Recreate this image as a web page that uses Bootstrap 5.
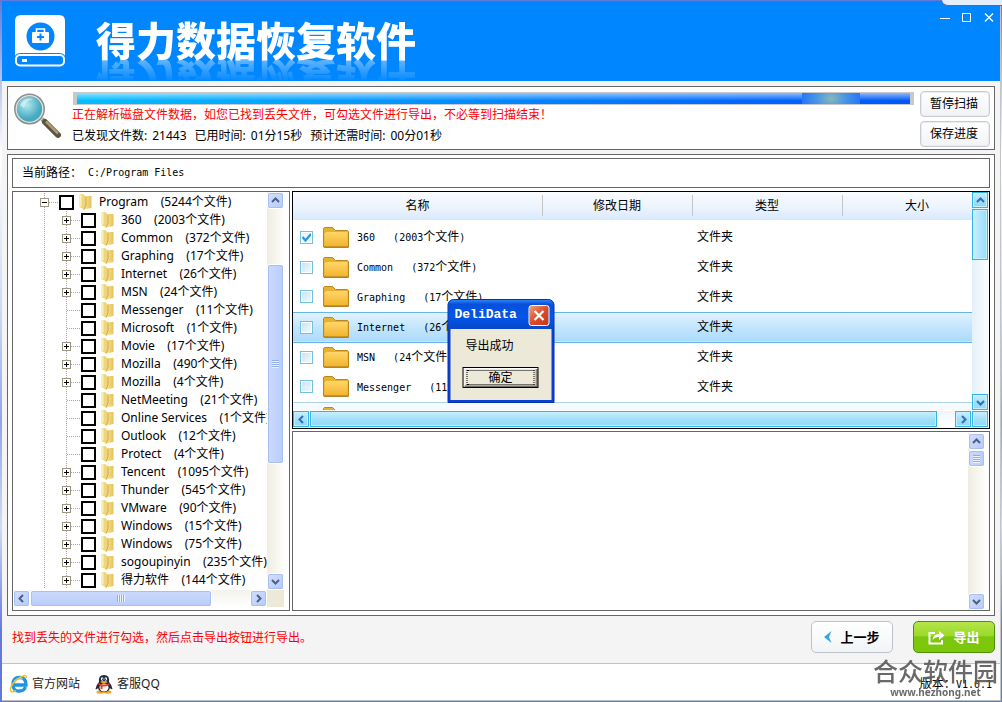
<!DOCTYPE html>
<html lang="zh-CN">
<head>
<meta charset="utf-8">
<meta name="viewport" content="width=device-width, initial-scale=1">
<title>得力数据恢复软件</title>
<link href="https://cdn.jsdelivr.net/npm/bootstrap@5.3.0/dist/css/bootstrap.min.css" rel="stylesheet">
<style>
body{font:12px/18px "Noto Sans","Noto Sans CJK SC",sans-serif;color:#000;background:linear-gradient(#5f78dc,#b9c8ee 12%,#fff 22%,#c9d8f4 45%,#8ea6e6 60%,#cfdcf5 75%,#6478d8 90%)}
button{font-family:inherit;color:#000}
.app-shell{padding:1px 1px 1px 2px}
.app-window{background:#f4f4f4;border-bottom:1px solid #bbb;border-right:1px solid #c4c4c4}
.desk-tab{position:absolute;top:0;right:0;width:60px;height:6px;background:#e4eefb;border-bottom:1px solid #56a;border-radius:0 0 0 6px}
.title-bar{background:#0087ff;height:80px;padding-left:13px}
.app-name{font:900 40px/40px "Noto Sans CJK SC",sans-serif;color:#fff;margin:0 0 4px 31px;-webkit-box-reflect:below 1px linear-gradient(transparent 45%,rgba(255,255,255,.38))}
.win-buttons{padding:9px 3px 0 0;gap:6px}
.win-buttons button{border:0;background:none;padding:0;width:16px;height:16px;line-height:0}
.box{border:1px solid #666;background:#fff}
.scan-box{margin:5px 5px 0;padding:4px 4px 2px 5px}
.scan-info{margin-left:10px}
.scan-tools{margin-left:6px}
.scan-progress{height:13px;border-radius:0;background:#c9c9c9;padding:1px 4px;margin-top:1px}
.scan-bar{background:linear-gradient(#ffffff90,#ffffff00 70%),linear-gradient(90deg,#00bfff,#0068ff 80%,#0058f6);position:relative}
.scan-bar::after{content:"";position:absolute;left:87%;width:7%;top:0;bottom:0;background:radial-gradient(ellipse 28px 20px at center,#88b8b8,#4a97e4 50%,#2b78f8)}
.scan-lines{margin-left:-1px}
.scan-stats{gap:8px;margin-top:2px}
.scan-stats b{font-weight:400;margin-left:5px}
.red-text{color:#f00}
.side-btn{width:70px;height:26px;border:1px solid #c9ccd3;border-radius:4px;background:linear-gradient(#fff,#f1f3f6);padding:0 2px 0 0;font-size:12px;box-shadow:inset 0 0 0 1px #e9ebef}
.main-box{margin:4px 5px 0;padding:3px 4px 4px;min-height:0;gap:3px}
.path-box{height:30px;padding:0 9px}
.half{font:10px/18px "DejaVu Sans Mono","Liberation Mono",monospace;white-space:pre}
.half b{font:12px/18px "Noto Sans CJK SC",sans-serif}
.panes,.right-pane{gap:2px;min-height:0;min-width:0}
.tree-box{width:278px;padding:0 5px 3px 0}
.pane-body{min-height:0}
.tree-view{overflow:hidden;padding:1px 0 0 27px}
.tree-view ul{list-style:none;margin:0;padding:0;background:repeating-linear-gradient(#aaa590 0 1px,transparent 1px 2px) 4px 0/1px 100% no-repeat}
.tree-view ul ul{margin-left:22px}
.tree-row{height:18px;white-space:pre}
.twist{width:9px;height:9px;border:1px solid #9b9782;padding:0;background:#fff;line-height:0;flex:none}
.twist svg{display:block}
.twist-none{width:5px;margin-right:4px;flex:none}
.dots{width:10px;height:1px;background:repeating-linear-gradient(90deg,#aaa590 0 1px,transparent 1px 2px);flex:none}
.twist-none+.dots{width:14px;margin-left:-4px}
.tree-row input{appearance:none;width:15px;height:15px;border:2px solid #000;background:#fff;margin:0 5px 0 0;flex:none}
.tree-row svg.fold{margin-right:7px;flex:none}
.xp-v{width:17px;background:linear-gradient(90deg,#efede2,#fdfdfa)}
.xp-h{height:17px;background:linear-gradient(#f3f2ea,#fff)}
.xp-btn,.xp-thumb{border:1px solid #fff;outline:1px solid #a9bff2;outline-offset:-2px;border-radius:3px;background:linear-gradient(135deg,#d2e0ff,#b5caf9);padding:0;width:17px;height:17px;flex:none;display:flex;align-items:center;justify-content:center}
.xp-v .xp-thumb{height:auto;min-height:17px;background:linear-gradient(90deg,#cbdafe,#b9cdfb)}
.xp-h .xp-thumb{width:auto;background:linear-gradient(#cbdafe,#b9cdfb)}
.grip-v{width:7px;height:8px;background:repeating-linear-gradient(#8eacec 0 1px,#eef4ff 1px 2px)}
.grip-h{width:8px;height:7px;background:repeating-linear-gradient(90deg,#8eacec 0 1px,#eef4ff 1px 2px)}
.xp-corner{width:17px;background:#ece9d8}
.file-box{border:1px solid #000;background:#fff;height:238px;flex:none;padding-right:1px}
.file-view{overflow:hidden}
.file-table{width:100%;table-layout:fixed;border-collapse:collapse}
.file-table th{height:30px;font-weight:400;text-align:center;padding:0 0 2px;position:relative;background:linear-gradient(#fafcff,#e9f2fd 60%,#d8e9fe 92%,#fff 93%)}
.file-table th:last-child{padding-left:20px}
.file-table th+th::before{content:"";position:absolute;left:0;top:3px;width:1px;height:21px;background:#c5c5c5}
.file-table td{height:30px;padding:0 0 0 5px;white-space:nowrap;overflow:hidden}
.file-table td:first-child{padding-left:4px}
.file-table tr.picked td{background:linear-gradient(#e2f2fe,#c3e5fd 50%,#aadafb);border:solid #65b3e8;border-width:1px 0}
.file-table tr.next-row td{border-top:1px solid #abd5e5;background:#f7fafd}
.file-table input{appearance:none;width:13px;height:13px;border:1px solid #73bfdf;background:linear-gradient(135deg,#c5e3ef,#f4fbfd);box-shadow:inset 0 0 0 1px #fff;margin:0 10px 0 3px;flex:none}
.file-table input:checked{background:#e6f6fc url("data:image/svg+xml,%3Csvg xmlns='http://www.w3.org/2000/svg' viewBox='0 0 11 11'%3E%3Cpath d='M1.5 5 4.5 8.5 10 2' fill='none' stroke='%232c97da' stroke-width='2.2'/%3E%3C/svg%3E") center}
.file-table svg{margin-right:8px;flex:none}
.sky-v{width:16px;background:linear-gradient(90deg,#e4f1f8,#fafdff)}
.sky-h{height:16px;background:linear-gradient(#eef6fb,#fff)}
.sky-btn,.sky-thumb{width:16px;height:16px;flex:none;border:1px solid #34b4e4;background:linear-gradient(#c9effe,#a3e0fa 50%,#90d8f7);box-shadow:inset 0 0 0 1px #c6effd;padding:0;display:flex;align-items:center;justify-content:center}
.sky-v .sky-thumb{height:51px;margin-top:1px;background:linear-gradient(90deg,#c9effe,#98dcf9)}
.sky-h .sky-thumb{width:auto;margin-left:1px}
.sky-row{gap:1px;padding:1px 0}
.preview-box{padding:1px 4px 0 0}
.action-bar{height:47px;padding:5px 5px 0 10px}
.act-btn{width:82px;height:32px;border-radius:5px;font-size:13px;font-weight:700;padding:0;display:flex;align-items:center;justify-content:center;gap:8px}
.prev-btn{border:1px solid #bfc1ca;background:linear-gradient(#fff,#f1f4f6);margin-right:20px}
.export-btn{border:1px solid #4f9209;color:#fff;background:linear-gradient(#b4e64a,#9bd92b 45%,#7cc70d 50%,#7dc60c)}
.app-footer{height:37px;border-top:1px solid #c3c3c3;background:#fff;padding:4px 8px 0 7px}
.app-footer a{color:#222;text-decoration:none;gap:3px;margin-right:14px}
.watermark{position:absolute;right:2px;top:-9px;text-align:center;color:#555;opacity:.88;font:500 25px/31px "Noto Sans CJK SC",sans-serif;pointer-events:none}
.watermark small{display:block;font:700 10px/12px "Noto Sans",sans-serif}
.msg-box{position:absolute;left:50%;top:50%;width:107px;transform:translate(-50%,-50%);background:#0840d8;border:1px solid #0831a8;border-radius:6px 6px 0 0;padding:0 2px 2px}
.msg-title{height:29px;margin:0 -2px;padding:1px 4px 0 6px;border-radius:5px 5px 0 0;background:linear-gradient(#2c83f8,#0650dc 15%,#0455e8 60%,#0647c8);color:#fff;font:700 13px/28px "Liberation Mono",monospace}
.msg-close{width:21px;height:21px;border:1px solid #fff;border-radius:3px;background:linear-gradient(135deg,#f0a080,#dc4c28 50%,#c23a18);padding:0;line-height:0}
.msg-body{background:#ece9d8;height:71px;padding:8px 13px 0 12px}
.msg-body p{margin:0;padding-left:3px}
.ok-btn{display:block;width:76px;height:21px;margin-top:12px;padding:2px 3px;background:#ece9d8;border:1px solid #000;box-shadow:inset 1px 1px #fff,inset -1px -1px #716f64,inset -2px -2px #aca899;font-size:12px}
.ok-btn span{display:block;height:15px;line-height:13px;border:1px dotted #000}
</style>
</head>
<body>
<svg width="0" height="0" class="position-absolute" aria-hidden="true">
<defs>
<linearGradient id="gold" x2="0" y2="1"><stop stop-color="#ffd669"/><stop offset="1" stop-color="#f2b530"/></linearGradient>
<linearGradient id="pale" x2="1"><stop stop-color="#fbeda4"/><stop offset="1" stop-color="#e3c15a"/></linearGradient>
<radialGradient id="lens" cx=".4" cy=".35"><stop stop-color="#b3eaf0"/><stop offset="1" stop-color="#46aabf"/></radialGradient>
</defs>
<symbol id="folder" viewBox="0 0 26 21"><path d="M.5 20V1.500l1-1h8l3 3h12l1 1V20z" fill="#e6b12f" stroke="#bb861b"/><path d="M1.500 6.500l2-1.500h21v14h-23z" fill="url(#gold)"/><path d="M1 20.300h24.500" stroke="#a8741a"/></symbol>
<symbol id="book" viewBox="0 0 13 16"><path d="M4 2h8.500v12L5 15.500z" fill="url(#pale)"/><path d="M.5.500L4 0l3 2.500V11l-2 4.500-4.500-2.500z" fill="#efd67c"/><path d="M1.500 1v11.500" stroke="#fbf0bd" stroke-width="2"/><path d="M5 15.500l2-4.500V3" fill="none" stroke="#cfa845"/></symbol>
<symbol id="up" viewBox="0 0 9 9"><path d="M1 6l3.500-3.500L8 6" fill="none" stroke="currentColor" stroke-width="2"/></symbol>
<symbol id="down" viewBox="0 0 9 9"><path d="M1 3l3.500 3.500L8 3" fill="none" stroke="currentColor" stroke-width="2"/></symbol>
<symbol id="left" viewBox="0 0 9 9"><path d="M6 1L2.500 4.500 6 8" fill="none" stroke="currentColor" stroke-width="2"/></symbol>
<symbol id="right" viewBox="0 0 9 9"><path d="M3 1l3.500 3.500L3 8" fill="none" stroke="currentColor" stroke-width="2"/></symbol>
</svg>

<div class="app-shell vh-100 position-relative">
<div class="app-window h-100 d-flex flex-column">
  <header class="title-bar d-flex justify-content-between flex-shrink-0">
    <div class="d-flex align-items-center">
      <svg width="50" height="52" viewBox="0 0 50 52" aria-hidden="true"><path d="M6 0h38q6 0 6 6v35q-1-3-6-3H6q-5 0-6 3V6q0-6 6-6z" fill="#fff"/><circle cx="25.500" cy="21.500" r="14" fill="#0087ff"/><rect x="17" y="17" width="17" height="11" rx="1" fill="#fff"/><path d="M21.500 17v-3h8v3" fill="none" stroke="#fff" stroke-width="1.600"/><path d="M25.500 18.500v7M22 22h7" stroke="#0087ff" stroke-width="2"/><rect x="1" y="40" width="48" height="10.500" rx="4" fill="#0087ff" stroke="#fff" stroke-width="2"/><rect x="7" y="44" width="5" height="3" fill="#fff"/></svg>
      <h1 class="app-name">得力数据恢复软件</h1>
    </div>
    <div class="win-buttons d-flex align-items-start">
      <button aria-label="最小化"><svg width="10" height="10"><path d="M0 5.500h10" stroke="#fff"/></svg></button>
      <button aria-label="最大化"><svg width="10" height="10"><path d="M.5.5h8v8h-8z" fill="none" stroke="#fff"/></svg></button>
      <button aria-label="关闭"><svg width="10" height="10"><path d="M1 .5l8 8M9 .5L1 8.500" stroke="#fff" stroke-width="1.300"/></svg></button>
    </div>
  </header>

  <section class="scan-box box d-flex">
    <svg width="50" height="50" viewBox="0 0 50 50" class="flex-shrink-0" aria-hidden="true"><path d="M29 28l5 5" stroke="#999" stroke-width="4"/><path d="M32 31L45 44" stroke="#5c5440" stroke-width="6" stroke-linecap="round"/><path d="M33 30.500L45 42.500" stroke="#ab9c73" stroke-width="2.500"/><circle cx="16.500" cy="18" r="14" fill="url(#lens)" stroke="#87918f" stroke-width="3"/><circle cx="16.500" cy="18" r="13.300" fill="none" stroke="#dce6e8" stroke-width="1.300"/><path d="M7 14q4-8 14-6-9 1-10 9z" fill="#fff" opacity=".5"/></svg>
    <div class="scan-info flex-grow-1">
      <div class="progress scan-progress" role="progressbar" aria-label="扫描进度" aria-valuenow="100" aria-valuemin="0" aria-valuemax="100"><div class="progress-bar scan-bar" style="width:100%"></div></div>
      <div class="scan-lines">
        <div class="red-text mt-1 lh-1 pb-1">正在解析磁盘文件数据，如您已找到丢失文件，可勾选文件进行导出，不必等到扫描结束！</div>
        <div class="scan-stats d-flex"><span>已发现文件数:<b>21443</b></span><span>已用时间:<b>01分15秒</b></span><span>预计还需时间:<b>00分01秒</b></span></div>
      </div>
    </div>
    <div class="scan-tools d-flex flex-column gap-1"><button class="side-btn">暂停扫描</button><button class="side-btn">保存进度</button></div>
  </section>

  <main class="main-box box flex-grow-1 d-flex flex-column">
    <div class="path-box box d-flex align-items-center flex-shrink-0"><span>当前路径：</span><span class="half"> C:/Program Files</span></div>
    <div class="panes d-flex flex-grow-1">
      <section class="tree-box box d-flex flex-column flex-shrink-0">
        <div class="pane-body d-flex flex-grow-1">
          <nav class="tree-view flex-grow-1" aria-label="文件夹" id="tree"></nav>
          <div class="xp-v d-flex flex-column">
            <button class="xp-btn" aria-label="向上"><svg width="9" height="9" color="#4d6185"><use href="#up"/></svg></button>
            <div style="flex:55"></div><div class="xp-thumb" style="flex:199"><i class="grip-v"></i></div><div style="flex:109"></div>
            <button class="xp-btn" aria-label="向下"><svg width="9" height="9" color="#4d6185"><use href="#down"/></svg></button>
          </div>
        </div>
        <div class="d-flex">
          <div class="xp-h d-flex flex-grow-1">
            <button class="xp-btn" aria-label="向左"><svg width="9" height="9" color="#4d6185"><use href="#left"/></svg></button>
            <div class="xp-thumb" style="flex:182"><i class="grip-h"></i></div><div style="flex:38"></div>
            <button class="xp-btn" aria-label="向右"><svg width="9" height="9" color="#4d6185"><use href="#right"/></svg></button>
          </div>
          <div class="xp-corner"></div>
        </div>
      </section>

      <div class="right-pane flex-grow-1 d-flex flex-column">
        <section class="file-box d-flex flex-column">
          <div class="pane-body d-flex flex-grow-1">
            <div class="file-view flex-grow-1">
              <table class="file-table">
                <colgroup><col><col style="width:150px"><col style="width:150px"><col style="width:130px"></colgroup>
                <thead><tr><th scope="col">名称</th><th scope="col">修改日期</th><th scope="col">类型</th><th scope="col">大小</th></tr></thead>
                <tbody id="files"></tbody>
              </table>
            </div>
            <div class="sky-v d-flex flex-column">
              <button class="sky-btn" aria-label="向上"><svg width="9" height="9" color="#2d6fbd"><use href="#up"/></svg></button>
              <div class="sky-thumb"></div><div class="flex-grow-1"></div>
              <button class="sky-btn" aria-label="向下"><svg width="9" height="9" color="#2d6fbd"><use href="#down"/></svg></button>
            </div>
          </div>
          <div class="sky-row d-flex">
            <div class="sky-h d-flex flex-grow-1">
              <button class="sky-btn" aria-label="向左"><svg width="9" height="9" color="#2d6fbd"><use href="#left"/></svg></button>
              <div class="sky-thumb" style="flex:627"></div><div style="flex:18"></div>
              <button class="sky-btn" aria-label="向右"><svg width="9" height="9" color="#2d6fbd"><use href="#right"/></svg></button>
            </div>
            <div class="sky-btn"></div>
          </div>
        </section>
        <section class="preview-box box flex-grow-1 d-flex justify-content-end" aria-label="预览">
          <div class="xp-v d-flex flex-column justify-content-between">
            <div><button class="xp-btn" aria-label="向上"><svg width="9" height="9" color="#4d6185"><use href="#up"/></svg></button><div class="xp-thumb"><i class="grip-v"></i></div></div>
            <button class="xp-btn" aria-label="向下"><svg width="9" height="9" color="#4d6185"><use href="#down"/></svg></button>
          </div>
        </section>
      </div>
    </div>
  </main>

  <div class="action-bar d-flex align-items-start flex-shrink-0">
    <span class="red-text flex-grow-1 pt-2">找到丢失的文件进行勾选，然后点击导出按钮进行导出。</span>
    <button class="act-btn prev-btn"><svg width="8" height="12" viewBox="0 0 8 12"><path d="M7.500 0L0 6l7.500 6L5 6z" fill="#35a7e0"/></svg>上一步</button>
    <button class="act-btn export-btn"><svg width="17" height="15" viewBox="0 0 17 15"><path d="M7 3H1.500v10.500H14V10" fill="none" stroke="#fff" stroke-width="2"/><path d="M4.500 10Q5 4 11 4V1l5.500 4.500L11 10V7q-4 0-6.500 3z" fill="#fff"/></svg>导出</button>
  </div>

  <footer class="app-footer d-flex align-items-center flex-shrink-0 position-relative">
    <a href="#" class="d-flex align-items-center"><svg width="20" height="20" viewBox="0 0 20 20" aria-hidden="true"><path d="M4.500 11h12.500Q17 3.500 10.500 3.500T4 10.500t6.500 6.500q4.500 0 6-4" fill="none" stroke="#1d95e3" stroke-width="3.300"/><path d="M5 7q3-4 9-2" stroke="#8bdcff" fill="none"/><path d="M17.500 4Q18-.5 11 3.500 3 8.500 1.500 14.500 1 20 7 16.500" fill="none" stroke="#f2bd25" stroke-width="1.500"/></svg>官方网站</a>
    <a href="#" class="d-flex align-items-center"><svg width="20" height="20" viewBox="0 0 20 20" aria-hidden="true"><ellipse cx="6.500" cy="18" rx="4" ry="1.700" fill="#f0a51d"/><ellipse cx="13.500" cy="18" rx="4" ry="1.700" fill="#f0a51d"/><path d="M5 8Q4 1 10 1t5 7q3 3 3.500 7-1 1-2.500-1-1 4-6 4t-6-4q-1.500 2-2.500 1Q2 11 5 8z" fill="#202b3c"/><ellipse cx="10" cy="13.500" rx="4.500" ry="4" fill="#fff"/><ellipse cx="8.200" cy="5" rx="1.300" ry="1.800" fill="#fff"/><ellipse cx="11.800" cy="5" rx="1.300" ry="1.800" fill="#fff"/><circle cx="8.600" cy="5.200" r=".6"/><circle cx="11.400" cy="5.200" r=".6"/><ellipse cx="10" cy="8" rx="3.300" ry="1" fill="#f3ac20"/><path d="M4.500 9q5.500 3 11 0v2q-3 1.500-7 1.500V15H6.500v-3l-2-1z" fill="#e33a24"/></svg>客服QQ</a>
    <span class="ms-auto">版本：<span class="half">V1.0.1</span></span>
    <div class="watermark">合众软件园<small>www.hezhong.net</small></div>
  </footer>
</div>

<div class="desk-tab"></div>
<div class="msg-box" role="dialog" aria-labelledby="msgTitle">
  <div class="msg-title d-flex align-items-center justify-content-between"><span id="msgTitle">DeliData</span><button class="msg-close" aria-label="关闭"><svg width="13" height="13"><path d="M2 2l9 9M11 2l-9 9" stroke="#fff" stroke-width="2.200"/></svg></button></div>
  <div class="msg-body"><p>导出成功</p><button class="ok-btn"><span>确定</span></button></div>
</div>
</div>

<script>
const folders = [["360",2003,1],["Common",372,1],["Graphing",17,1],["Internet",26,1],["MSN",24,1],["Messenger",11,0],["Microsoft",1,0],["Movie",17,1],["Mozilla",490,1],["Mozilla",4,1],["NetMeeting",21,0],["Online Services",1,0],["Outlook",12,0],["Protect",4,0],["Tencent",1095,1],["Thunder",545,1],["VMware",90,1],["Windows",15,1],["Windows",75,1],["sogoupinyin",235,1],["得力软件",144,1]];
const sign = open => `<svg width="7" height="7"><path d="M1 3.5h5${open ? "" : "M3.5 1v5"}" stroke="#000"/></svg>`;
const row = (id, name, n, kids, open) => `<div class="tree-row d-flex align-items-center">${kids ? `<button class="twist" aria-label="展开">${sign(open)}</button>` : '<span class="twist-none"></span>'}<span class="dots"></span><input type="checkbox" id="${id}"><svg class="fold" width="13" height="16"><use href="#book"/></svg><label for="${id}">${name}    (${n}个文件)</label></div>`;
document.getElementById("tree").innerHTML = `<ul><li>${row("root","Program",5244,1,1)}<ul>${folders.map((f,i) => `<li>${row("t"+i,f[0],f[1],f[2],0)}</li>`).join("")}</ul></li></ul>`;
document.getElementById("files").innerHTML = folders.slice(0,7).map((f,i) => `<tr class="${i==3?"picked":i==6?"next-row":""}"><td><div class="d-flex align-items-center"><input type="checkbox" id="f${i}"${i?"":" checked"}><svg width="26" height="21"><use href="#folder"/></svg><label class="half" for="f${i}">${f[0]}   (${f[1]}<b>个文件</b>)</label></div></td><td></td><td>文件夹</td><td></td></tr>`).join("");
</script>
<script src="https://cdn.jsdelivr.net/npm/bootstrap@5.3.0/dist/js/bootstrap.bundle.min.js"></script>
</body>
</html>
